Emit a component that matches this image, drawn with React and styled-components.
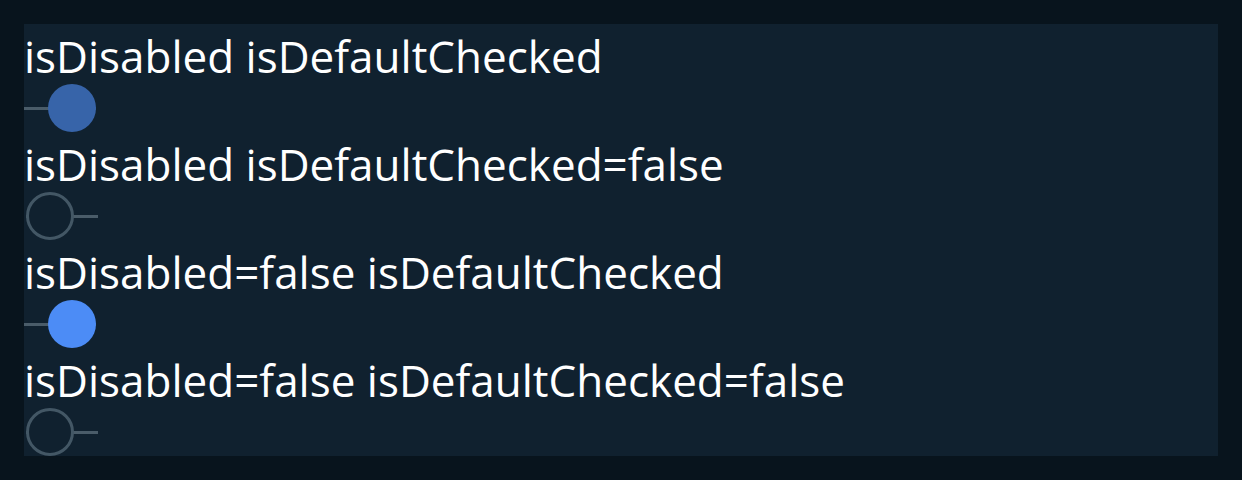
import styled, { createGlobalStyle } from "styled-components";

const GlobalStyle = createGlobalStyle`
  html, body {
    margin: 0;
    padding: 0;
    background: #08141d;
  }
  body {
    font-family: "Open Sans", "Noto Sans", sans-serif;
  }
`;

const Page = styled.div`
  padding: 24px;
  width: 1242px;
  box-sizing: border-box;
`;

const Panel = styled.div`
  background: #10212f;
  display: flex;
  flex-direction: column;
`;

const Label = styled.div`
  color: #ffffff;
  font-size: 44px;
  line-height: 60px;
  height: 58px;
  padding-top: 2px;
  white-space: nowrap;
`;

const Toggle = styled.div`
  position: relative;
  width: 72px;
  height: 48px;
  margin-left: ${(p) => (p.checked ? "0" : "2px")};
`;

const Track = styled.div`
  position: absolute;
  left: 0;
  right: 0;
  top: 50%;
  height: 3px;
  margin-top: -1px;
  background: #4a5c69;
`;

const Knob = styled.div`
  position: absolute;
  top: 0;
  left: ${(p) => (p.checked ? "24px" : "0")};
  width: 48px;
  height: 48px;
  box-sizing: border-box;
  border-radius: 50%;
  background: ${(p) =>
    p.checked ? (p.disabled ? "#3764a9" : "#4c8cf6") : "#10212f"};
  border: ${(p) => (p.checked ? "none" : "3px solid #435765")};
`;

const rows = [
  { label: "isDisabled isDefaultChecked", disabled: true, checked: true },
  { label: "isDisabled isDefaultChecked=false", disabled: true, checked: false },
  { label: "isDisabled=false isDefaultChecked", disabled: false, checked: true },
  { label: "isDisabled=false isDefaultChecked=false", disabled: false, checked: false },
];

export default function App() {
  return (
    <>
      <GlobalStyle />
      <Page>
        <Panel>
          {rows.map((r) => (
            <div key={r.label}>
              <Label>{r.label}</Label>
              <Toggle checked={r.checked}>
                <Track />
                <Knob checked={r.checked} disabled={r.disabled} />
              </Toggle>
            </div>
          ))}
        </Panel>
      </Page>
    </>
  );
}
